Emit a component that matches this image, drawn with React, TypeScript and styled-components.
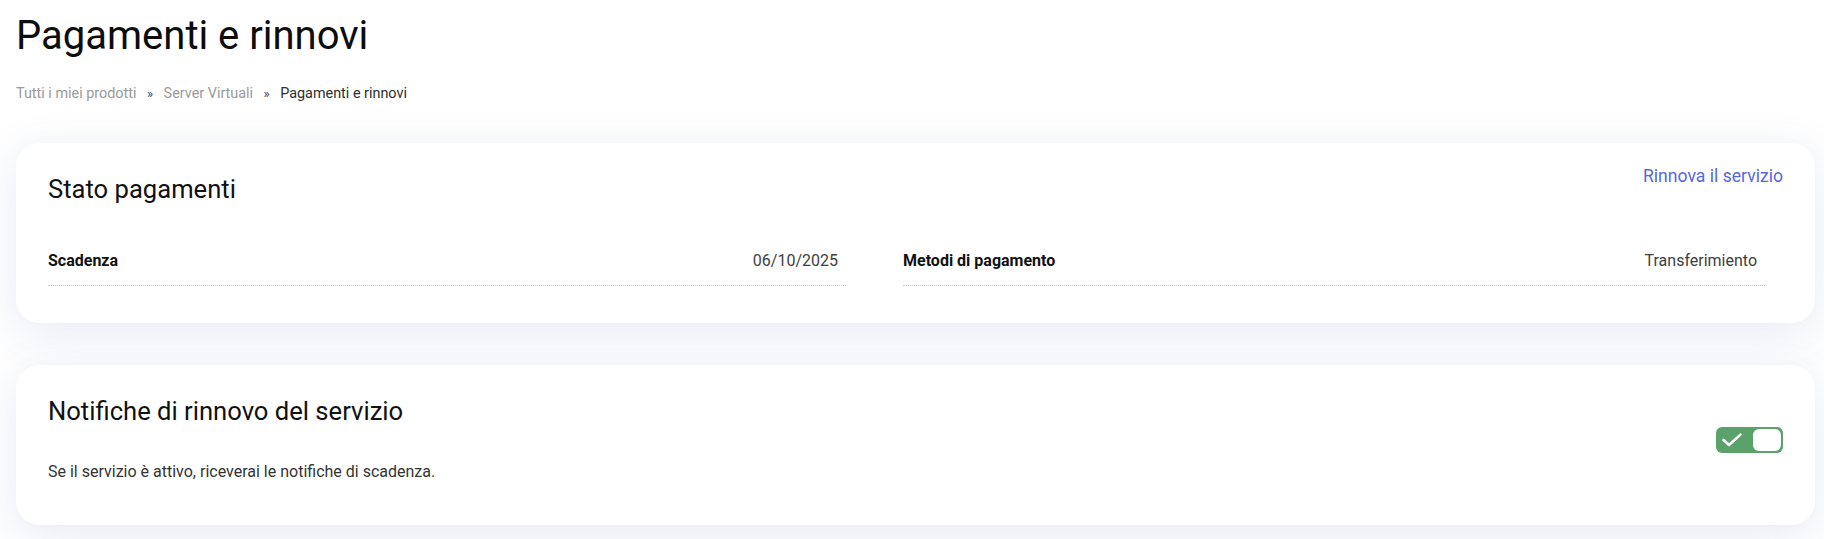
import React from "react";
import styled, { createGlobalStyle } from "styled-components";

const GlobalStyle = createGlobalStyle`
  html, body {
    margin: 0;
    padding: 0;
    background: #ffffff;
    font-family: Roboto, "Noto Sans", Arial, sans-serif;
    color: #222;
  }
  * { box-sizing: border-box; }
`;

const Page = styled.main`
  padding: 12px 9px 14px 16px;
`;

const PageTitle = styled.h1`
  margin: 0;
  font-size: 40px;
  font-weight: 400;
  line-height: 48px;
  color: #0d0d0d;
`;

const Breadcrumb = styled.nav`
  display: flex;
  align-items: center;
  margin-top: 25px;
  font-size: 14.4px;
  line-height: 17px;
`;

const Crumb = styled.span<{ $current?: boolean }>`
  color: ${(p) => (p.$current ? "#2e2e2e" : "#9a9a9a")};
`;

const Sep = styled.span`
  color: #2f3d66;
  font-size: 13px;
  margin: 0 10.5px;
`;

const Cards = styled.div`
  margin-top: 41px;
  display: flex;
  flex-direction: column;
  gap: 42px;
`;

const Card = styled.section`
  background: #ffffff;
  border-radius: 24px;
  box-shadow: 0 10px 45px rgba(70, 95, 170, 0.13);
`;

const PaymentCard = styled(Card)`
  padding: 23px 32px 37px 32px;
`;

const CardHeader = styled.div`
  display: flex;
  justify-content: space-between;
  align-items: flex-start;
`;

const CardTitle = styled.h2`
  margin: 8px 0 0 0;
  font-size: 25.6px;
  font-weight: 400;
  line-height: 30px;
  color: #111;
`;

const RenewLink = styled.a`
  font-size: 17.6px;
  line-height: 21px;
  color: #5767de;
  text-decoration: none;
  cursor: pointer;
`;

const InfoGrid = styled.div`
  display: grid;
  grid-template-columns: 798px 862px;
  column-gap: 57px;
  margin-top: 32px;
`;

const InfoRow = styled.div`
  display: flex;
  justify-content: space-between;
  align-items: center;
  padding: 15px 8px 15px 0;
  border-bottom: 1px dotted #c4c4c4;
  font-size: 16px;
  line-height: 19px;
`;

const InfoLabel = styled.span`
  font-weight: 700;
  color: #111;
`;

const InfoValue = styled.span`
  color: #404040;
`;

const NotifyCard = styled(Card)`
  display: flex;
  align-items: center;
  justify-content: space-between;
  padding: 31px 32px 44px 32px;
`;

const NotifyText = styled.div`
  display: flex;
  flex-direction: column;
`;

const NotifyTitle = styled(CardTitle)`
  margin: 0;
`;

const Description = styled.p`
  margin: 36px 0 0 0;
  font-size: 16px;
  line-height: 19px;
  color: #333;
`;

const Toggle = styled.button<{ $on: boolean }>`
  width: 67px;
  height: 26px;
  border: none;
  border-radius: 6px;
  padding: 2px;
  background: ${(p) => (p.$on ? "#5ba16a" : "#bbb")};
  display: flex;
  align-items: center;
  justify-content: space-between;
  cursor: pointer;
  margin-top: 3px;
`;

const Knob = styled.span`
  width: 28px;
  height: 22px;
  border-radius: 6px;
  background: #ffffff;
`;

const CheckWrap = styled.span`
  display: flex;
  align-items: center;
  justify-content: center;
  width: 27px;
  height: 22px;
`;

export default function App() {
  const [on, setOn] = React.useState(true);
  return (
    <>
      <GlobalStyle />
      <Page>
        <PageTitle>Pagamenti e rinnovi</PageTitle>
        <Breadcrumb>
          <Crumb>Tutti i miei prodotti</Crumb>
          <Sep>»</Sep>
          <Crumb>Server Virtuali</Crumb>
          <Sep>»</Sep>
          <Crumb $current>Pagamenti e rinnovi</Crumb>
        </Breadcrumb>
        <Cards>
          <PaymentCard>
            <CardHeader>
              <CardTitle>Stato pagamenti</CardTitle>
              <RenewLink>Rinnova il servizio</RenewLink>
            </CardHeader>
            <InfoGrid>
              <InfoRow>
                <InfoLabel>Scadenza</InfoLabel>
                <InfoValue>06/10/2025</InfoValue>
              </InfoRow>
              <InfoRow>
                <InfoLabel>Metodi di pagamento</InfoLabel>
                <InfoValue>Transferimiento</InfoValue>
              </InfoRow>
            </InfoGrid>
          </PaymentCard>
          <NotifyCard>
            <NotifyText>
              <NotifyTitle>Notifiche di rinnovo del servizio</NotifyTitle>
              <Description>
                Se il servizio è attivo, riceverai le notifiche di scadenza.
              </Description>
            </NotifyText>
            <Toggle $on={on} onClick={() => setOn(!on)} aria-pressed={on}>
              <CheckWrap>
                <svg width="20" height="14" viewBox="0 0 20 14" fill="none">
                  <path
                    d="M1.6 7 L7 12 L18.4 1.6"
                    stroke="#fff"
                    strokeWidth="2.6"
                    strokeLinecap="round"
                    strokeLinejoin="round"
                  />
                </svg>
              </CheckWrap>
              <Knob />
            </Toggle>
          </NotifyCard>
        </Cards>
      </Page>
    </>
  );
}
